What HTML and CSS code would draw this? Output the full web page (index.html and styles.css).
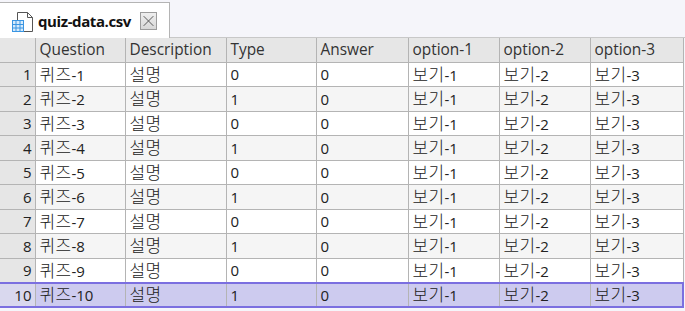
FILE: index.html
```html
<!DOCTYPE html>
<html>
<head>
<meta charset="utf-8">
<link rel="stylesheet" href="styles.css">
</head>
<body>
<div class="tabbar">
  <div class="tab">
    <svg class="file-icon" width="22" height="22" viewBox="0 0 22 22">
      <path d="M5.5 1.5 H15.5 L20.5 6.5 V20.5 H5.5 Z" fill="#fff" stroke="#555" stroke-width="1"/>
      <path d="M15.5 1.5 V6.5 H20.5" fill="none" stroke="#555" stroke-width="1"/>
      <rect x="0.5" y="9.5" width="11" height="11" fill="#d6eafb" stroke="#3a95e2" stroke-width="1"/>
      <path d="M0.5 13.5 H11.5 M0.5 17 H11.5 M4 9.5 V20.5 M8 9.5 V20.5" stroke="#3a95e2" stroke-width="1"/>
    </svg>
    <span class="tab-title">quiz-data.csv</span>
    <span class="close">
      <svg width="17" height="18" viewBox="0 0 17 18"><path d="M3 3.5 L14 14.5 M14 3.5 L3 14.5" stroke="#555" stroke-width="1.1"/></svg>
    </span>
  </div>
</div>
<table class="grid">
  <thead>
    <tr><th class="rn"></th><th class="c1">Question</th><th class="c2">Description</th><th class="c3">Type</th><th class="c4">Answer</th><th class="c5">option-1</th><th class="c6">option-2</th><th class="c7">option-3</th></tr>
  </thead>
  <tbody>
    <tr><td class="rn">1</td><td><span class="ko">퀴즈</span>-1</td><td><span class="ko">설명</span></td><td>0</td><td>0</td><td><span class="ko">보기</span>-1</td><td><span class="ko">보기</span>-2</td><td><span class="ko">보기</span>-3</td></tr>
    <tr><td class="rn">2</td><td><span class="ko">퀴즈</span>-2</td><td><span class="ko">설명</span></td><td>1</td><td>0</td><td><span class="ko">보기</span>-1</td><td><span class="ko">보기</span>-2</td><td><span class="ko">보기</span>-3</td></tr>
    <tr><td class="rn">3</td><td><span class="ko">퀴즈</span>-3</td><td><span class="ko">설명</span></td><td>0</td><td>0</td><td><span class="ko">보기</span>-1</td><td><span class="ko">보기</span>-2</td><td><span class="ko">보기</span>-3</td></tr>
    <tr><td class="rn">4</td><td><span class="ko">퀴즈</span>-4</td><td><span class="ko">설명</span></td><td>1</td><td>0</td><td><span class="ko">보기</span>-1</td><td><span class="ko">보기</span>-2</td><td><span class="ko">보기</span>-3</td></tr>
    <tr><td class="rn">5</td><td><span class="ko">퀴즈</span>-5</td><td><span class="ko">설명</span></td><td>0</td><td>0</td><td><span class="ko">보기</span>-1</td><td><span class="ko">보기</span>-2</td><td><span class="ko">보기</span>-3</td></tr>
    <tr><td class="rn">6</td><td><span class="ko">퀴즈</span>-6</td><td><span class="ko">설명</span></td><td>1</td><td>0</td><td><span class="ko">보기</span>-1</td><td><span class="ko">보기</span>-2</td><td><span class="ko">보기</span>-3</td></tr>
    <tr><td class="rn">7</td><td><span class="ko">퀴즈</span>-7</td><td><span class="ko">설명</span></td><td>0</td><td>0</td><td><span class="ko">보기</span>-1</td><td><span class="ko">보기</span>-2</td><td><span class="ko">보기</span>-3</td></tr>
    <tr><td class="rn">8</td><td><span class="ko">퀴즈</span>-8</td><td><span class="ko">설명</span></td><td>1</td><td>0</td><td><span class="ko">보기</span>-1</td><td><span class="ko">보기</span>-2</td><td><span class="ko">보기</span>-3</td></tr>
    <tr><td class="rn">9</td><td><span class="ko">퀴즈</span>-9</td><td><span class="ko">설명</span></td><td>0</td><td>0</td><td><span class="ko">보기</span>-1</td><td><span class="ko">보기</span>-2</td><td><span class="ko">보기</span>-3</td></tr>
    <tr class="sel"><td class="rn">10</td><td><span class="ko">퀴즈</span>-10</td><td><span class="ko">설명</span></td><td>1</td><td>0</td><td><span class="ko">보기</span>-1</td><td><span class="ko">보기</span>-2</td><td><span class="ko">보기</span>-3</td></tr>
  </tbody>
</table>
</body>
</html>
```
FILE: styles.css
```css
html, body {
  margin: 0;
  padding: 0;
  background: #f5f5fa;
  font-family: "Open Sans", "Noto Sans", "Noto Sans CJK KR", sans-serif;
  color: #222;
  width: 685px;
  height: 311px;
  overflow: hidden;
}
.tabbar {
  height: 38px;
  display: flex;
  align-items: flex-end;
  border-bottom: 1px solid #c8c8c8;
  box-sizing: border-box;
}
.tab {
  width: 170px;
  height: 36px;
  background: #fff;
  border-top: 1px solid #b4b4b4;
  border-right: 1px solid #b4b4b4;
  box-sizing: border-box;
  display: flex;
  align-items: center;
  padding-left: 12px;
  gap: 4px;
  margin-bottom: -1px;
}
.file-icon { flex: none; margin-top: 2px; }
.tab-title {
  font-weight: bold;
  font-size: 15px;
  color: #111;
  letter-spacing: -0.4px;
}
.close {
  width: 17px;
  height: 18px;
  box-sizing: border-box;
  border: 1px solid #9c9c9c;
  background: linear-gradient(#efefef, #d8d8d8);
  display: flex;
  align-items: center;
  justify-content: center;
  margin-left: 5px;
  margin-top: 1px;
}
.close svg { display: block; }
.grid {
  border-collapse: collapse;
  table-layout: fixed;
  width: 683px;
  background: #fff;
}
.grid th, .grid td {
  border: 1px solid #b4b4b4;
  height: 24.5px;
  padding: 0 0 0 4px;
  text-align: left;
  font-weight: normal;
  white-space: nowrap;
  box-sizing: border-box;
  line-height: 20px;
}
.grid th {
  background: #e6e6e6;
  font-size: 15.4px;
  color: #333;
  height: 24px;
}
.grid td {
  font-size: 15px;
  color: #222;
}
.grid td .ko {
  font-family: "Noto Sans CJK KR", sans-serif;
  font-size: 17px;
  font-weight: 300;
  letter-spacing: 0.3px;
}
.grid thead tr th { border-top: none; }
.grid tr > :first-child { border-left: none; }
.grid th.rn { width: 35px; }
.grid th.c1 { width: 90px; }
.grid th.c2 { width: 101px; }
.grid th.c3 { width: 90px; }
.grid th.c4 { width: 92px; }
.grid th.c5 { width: 91px; }
.grid th.c6 { width: 91px; }
.grid th.c7 { width: 93px; }
.grid td.rn {
  background: #e6e6e6;
  text-align: right;
  padding: 0 3px 0 0;
}
.grid tbody tr:nth-child(even) td { background: #f5f5f5; }
.grid tbody tr:nth-child(even) td.rn { background: #e6e6e6; }
.grid tbody tr.sel td {
  background: #cdcbef;
  border-top: 2px solid #7b6fe0;
  border-bottom: 2px solid #7b6fe0;
}
.grid tbody tr.sel td.rn { background: #d9d8ee; }
.grid tbody tr.sel td:last-child { border-right: 2px solid #7b6fe0; }
.grid tbody tr.sel td + td { border-left-color: #7b6fe0; }
```
